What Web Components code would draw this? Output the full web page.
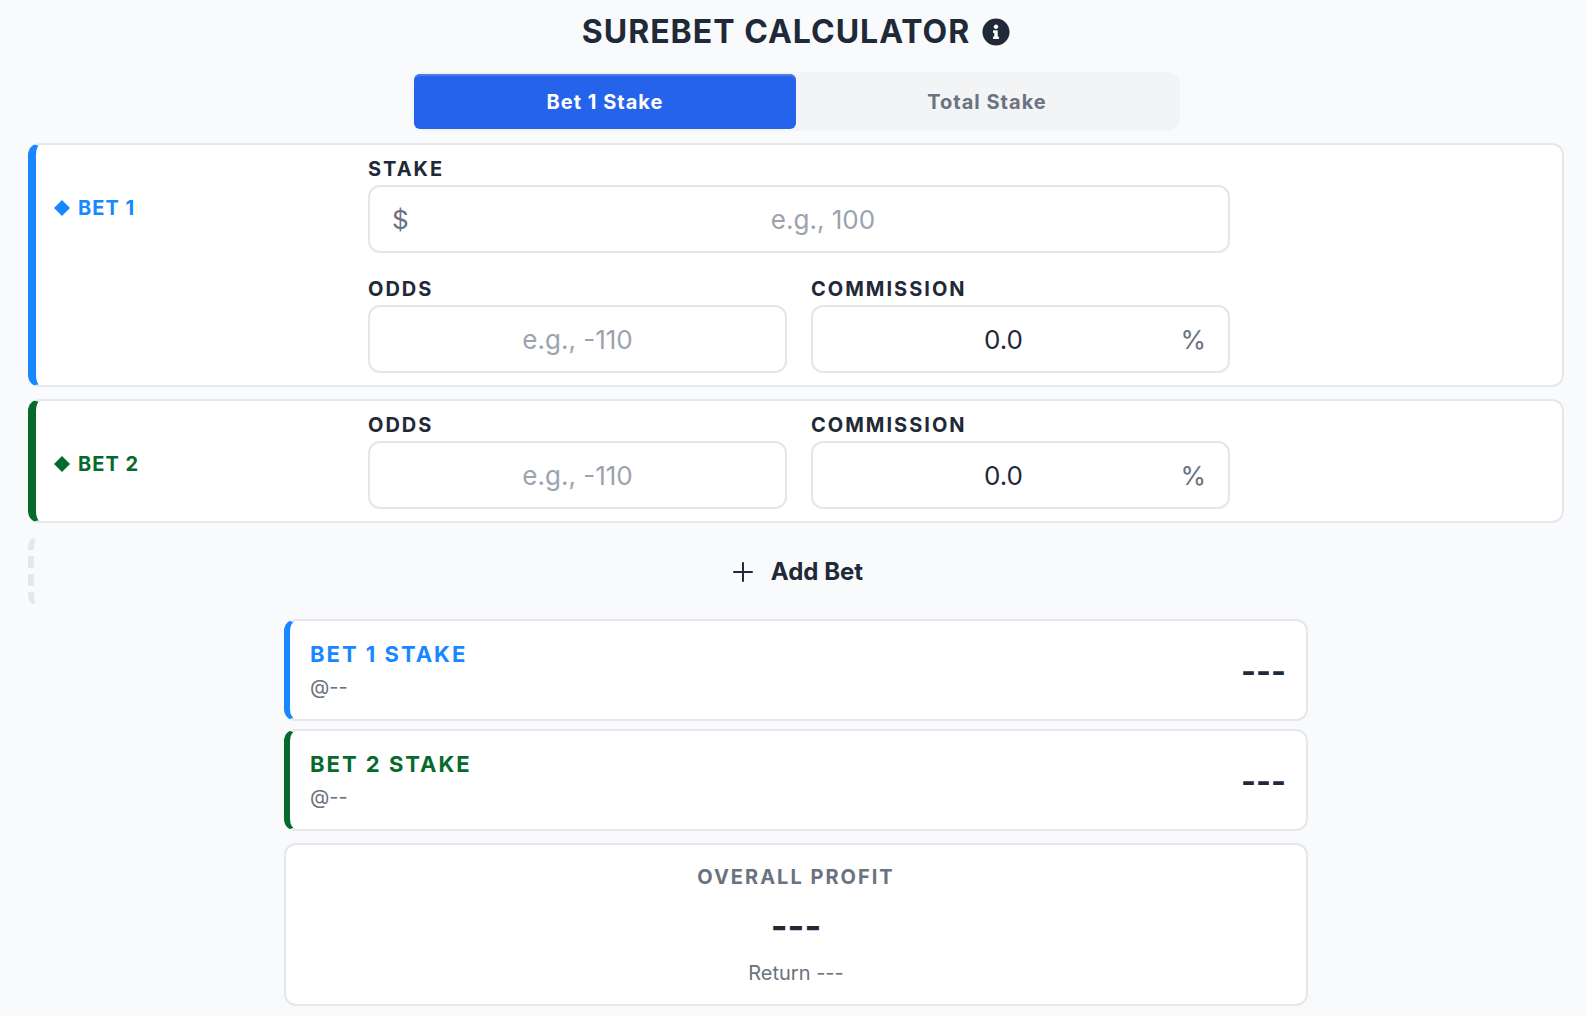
<!DOCTYPE html>
<html lang="en">
<head>
<meta charset="utf-8">
<meta name="viewport" content="width=device-width, initial-scale=1">
<title>Surebet Calculator</title>
<style>
  :root {
    --ink: #1f2937;
    --muted: #6b7280;
    --line: #e5e7eb;
    --blue: #1788ff;
    --green: #056a2b;
  }
  body {
    margin: 0;
    background: #f9fafc;
    color: var(--ink);
    font-family: Inter, "Liberation Sans", sans-serif;
    font-size: 20px;
    line-height: 24px;
  }
</style>
</head>
<body>
<surebet-calculator></surebet-calculator>

<template id="t-calculator">
  <style>
    :host { display: block; padding: 12px 22px 10px 28px; }
    main { display: flex; flex-direction: column; gap: 12px; }
    header { display: flex; justify-content: center; align-items: center; gap: 12px; padding-bottom: 8px; }
    h1 { margin: 0; font-size: 32px; line-height: 40px; font-weight: 700; letter-spacing: 1px; }
    .info { padding: 0; border: 0; background: none; color: inherit; display: flex; }
    .info svg { width: 28px; height: 28px; }
    .results { display: flex; flex-direction: column; gap: 8px; width: 100%; max-width: 1024px; margin: 0 auto; }
    profit-card { margin-top: 4px; }
  </style>
  <main>
    <header>
      <h1>SUREBET CALCULATOR</h1>
      <button class="info" type="button" aria-label="About this calculator">
        <svg viewBox="0 0 512 512" fill="currentColor" aria-hidden="true"><path d="M256 8C119 8 8 119.100 8 256c0 137 111 248 248 248s248-111 248-248C504 119.100 393 8 256 8zm0 110c23.200 0 42 18.800 42 42s-18.800 42-42 42-42-18.800-42-42 18.800-42 42-42zm56 254c0 6.600-5.400 12-12 12h-88c-6.600 0-12-5.400-12-12v-24c0-6.600 5.400-12 12-12h12v-64h-12c-6.600 0-12-5.400-12-12v-24c0-6.600 5.400-12 12-12h64c6.600 0 12 5.400 12 12v100h12c6.600 0 12 5.400 12 12z"/></svg>
      </button>
    </header>
    <stake-tabs></stake-tabs>
    <bet-card style="--accent: var(--blue)">
      <span slot="name">BET 1</span>
      <bet-field wide label="STAKE" placeholder="e.g., 100" prefix="$"></bet-field>
      <bet-field label="ODDS" placeholder="e.g., -110"></bet-field>
      <bet-field label="COMMISSION" value="0.0" suffix="%"></bet-field>
    </bet-card>
    <bet-card style="--accent: var(--green)">
      <span slot="name">BET 2</span>
      <bet-field label="ODDS" placeholder="e.g., -110"></bet-field>
      <bet-field label="COMMISSION" value="0.0" suffix="%"></bet-field>
    </bet-card>
    <add-bet>Add Bet</add-bet>
    <section class="results">
      <stake-result style="--accent: var(--blue)">
        <span slot="title">BET 1 STAKE</span><span slot="odds">@--</span><span slot="amount">---</span>
      </stake-result>
      <stake-result style="--accent: var(--green)">
        <span slot="title">BET 2 STAKE</span><span slot="odds">@--</span><span slot="amount">---</span>
      </stake-result>
      <profit-card>
        <span slot="title">OVERALL PROFIT</span><span slot="amount">---</span><span slot="return">Return ---</span>
      </profit-card>
    </section>
  </main>
</template>

<template id="t-tabs">
  <style>
    :host { display: flex; box-sizing: border-box; width: 100%; max-width: 768px; margin: 0 auto; padding: 2px; border-radius: 12px; background: #f3f4f6; }
    button { flex: 1; margin: 0; padding: 16px 0 15px; border: 0; border-radius: 6px; background: none; color: var(--muted); font: 700 20px/24px Inter, "Liberation Sans", sans-serif; letter-spacing: 1px; }
    button[aria-pressed="true"] { background: #2563eb; color: #fff; box-shadow: inset 0 2px #4a7def; }
  </style>
  <button type="button" aria-pressed="true">Bet 1 Stake</button>
  <button type="button" aria-pressed="false">Total Stake</button>
</template>

<template id="t-bet">
  <style>
    :host { display: grid; grid-template-columns: 1fr minmax(0, 862px) 1fr; padding: 12px 18px; border: 2px solid var(--line); border-left: 8px solid var(--accent); border-radius: 12px; background: #fff; }
    .name { display: flex; align-items: center; gap: 8px; align-self: start; padding-top: 39px; color: var(--accent); font-weight: 700; letter-spacing: 1px; }
    .name svg { width: 16px; height: 16px; }
    .fields { display: grid; grid-template-columns: 1fr 1fr; gap: 24px; }
  </style>
  <div class="name"><svg viewBox="0 0 16 16" fill="currentColor" aria-hidden="true"><path d="M8 0L16 8L8 16L0 8z"/></svg><slot name="name"></slot></div>
  <div class="fields"><slot></slot></div>
</template>

<template id="t-field">
  <style>
    :host { display: flex; flex-direction: column; gap: 4px; min-width: 0; }
    :host([wide]) { grid-column: 1 / -1; }
    label { font-weight: 700; letter-spacing: 2px; }
    .box { display: flex; align-items: center; height: 62px; padding: 2px 22px 0; border: 2px solid #e5e5ea; border-radius: 12px; background: #fff; font-size: 26px; line-height: 32px; }
    .box span { color: var(--muted); }
    .prefix { width: 48px; }
    .suffix { width: 34px; text-align: right; }
    .box span:empty { display: none; }
    input { flex: 1; min-width: 0; width: 100%; height: 32px; margin: 0; padding: 0; border: 0; outline: 0; background: none; color: var(--ink); font: inherit; text-align: center; }
    input::placeholder { color: #9ca3af; opacity: 1; }
  </style>
  <label for="input"></label>
  <div class="box"><span class="prefix"></span><input id="input" type="text" inputmode="decimal"><span class="suffix"></span></div>
</template>

<template id="t-add">
  <style>
    :host { display: block; border: 2px solid transparent; border-left: 6px dashed var(--line); border-radius: 12px; }
    button { display: flex; justify-content: center; align-items: center; gap: 18px; width: 100%; height: 68px; padding: 2px 0 0; border: 0; background: none; color: var(--ink); font: 700 24px/32px Inter, "Liberation Sans", sans-serif; }
    svg { width: 20px; height: 20px; }
  </style>
  <button type="button"><svg viewBox="0 0 20 20" stroke="currentColor" stroke-width="2" stroke-linecap="round" aria-hidden="true"><path d="M10 1V19M1 10H19"/></svg><slot></slot></button>
</template>

<template id="t-result">
  <style>
    :host { display: flex; justify-content: space-between; align-items: center; padding: 20px; border: 2px solid var(--line); border-left: 6px solid var(--accent); border-radius: 12px; background: #fff; }
    .text { display: flex; flex-direction: column; gap: 8px; }
    .title { color: var(--accent); font-size: 22px; line-height: 26px; font-weight: 700; letter-spacing: 2px; }
    .odds { color: var(--muted); }
    .amount { padding-top: 4px; font-size: 32px; line-height: 40px; font-weight: 700; }
  </style>
  <div class="text"><div class="title"><slot name="title"></slot></div><div class="odds"><slot name="odds"></slot></div></div>
  <div class="amount"><slot name="amount"></slot></div>
</template>

<template id="t-profit">
  <style>
    :host { display: flex; flex-direction: column; align-items: center; gap: 14px; padding: 20px 20px 19px; border: 2px solid var(--line); border-radius: 12px; background: #fff; color: var(--muted); }
    .title { font-weight: 700; letter-spacing: 2px; }
    .amount { padding-top: 2px; color: var(--ink); font-size: 36px; line-height: 42px; font-weight: 700; }
  </style>
  <div class="title"><slot name="title"></slot></div>
  <div class="amount"><slot name="amount"></slot></div>
  <div><slot name="return"></slot></div>
</template>

<script>
  class TemplateElement extends HTMLElement {
    constructor() {
      super();
      const root = this.attachShadow({ mode: "open" });
      root.append(document.getElementById(this.constructor.template).content.cloneNode(true));
    }
  }

  class BetField extends TemplateElement {
    static template = "t-field";
    connectedCallback() {
      const find = (selector) => this.shadowRoot.querySelector(selector);
      find("label").textContent = this.getAttribute("label");
      find(".prefix").textContent = this.getAttribute("prefix") || "";
      find(".suffix").textContent = this.getAttribute("suffix") || "";
      find("input").placeholder = this.getAttribute("placeholder") || "";
      find("input").value = this.getAttribute("value") || "";
    }
  }

  class StakeTabs extends TemplateElement {
    static template = "t-tabs";
    connectedCallback() {
      const tabs = [...this.shadowRoot.querySelectorAll("button")];
      tabs.forEach((tab) => tab.addEventListener("click", () => {
        tabs.forEach((other) => other.setAttribute("aria-pressed", String(other === tab)));
      }));
    }
  }

  customElements.define("bet-field", BetField);
  customElements.define("stake-tabs", StakeTabs);
  customElements.define("bet-card", class extends TemplateElement { static template = "t-bet"; });
  customElements.define("add-bet", class extends TemplateElement { static template = "t-add"; });
  customElements.define("stake-result", class extends TemplateElement { static template = "t-result"; });
  customElements.define("profit-card", class extends TemplateElement { static template = "t-profit"; });
  customElements.define("surebet-calculator", class extends TemplateElement { static template = "t-calculator"; });
</script>
</body>
</html>
